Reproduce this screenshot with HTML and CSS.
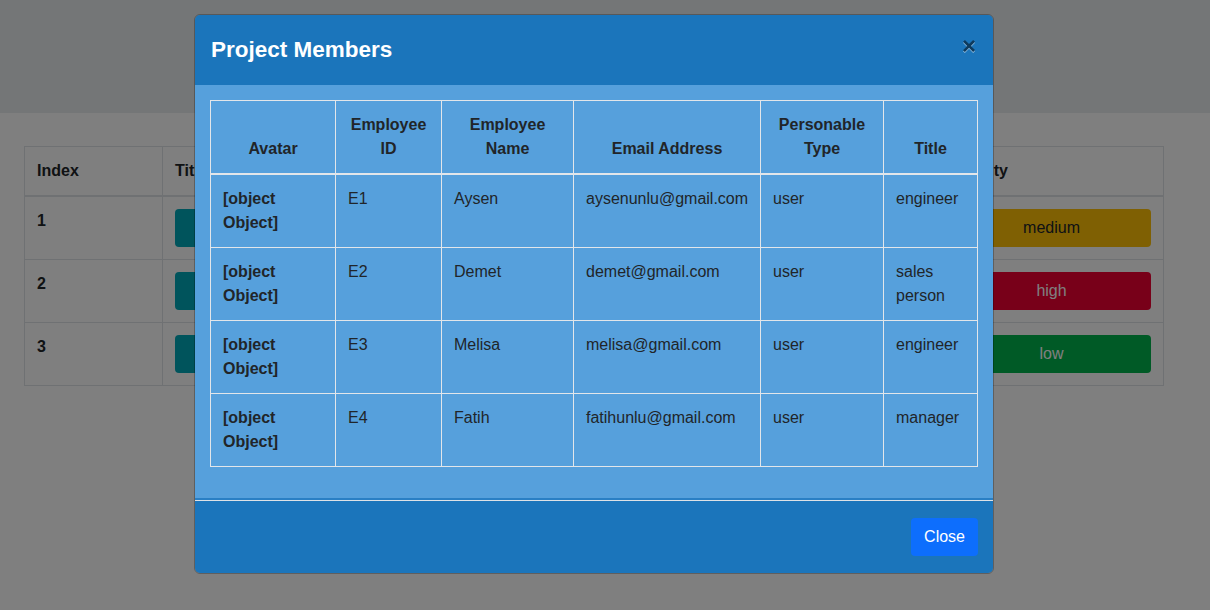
FILE: index.html
```html
<!DOCTYPE html>
<html lang="en">
  <head>
    <meta charset="UTF-8" />
    <meta name="viewport" content="width=device-width, initial-scale=1.0" />
    <title>Projects</title>
    <link rel="stylesheet" href="styles.css">
  </head>
  <body>
    <div class="top-band"></div>
    <div class="page">
      <table class="projects">
        <colgroup>
          <col style="width: 138px" />
          <col style="width: 300px" />
          <col style="width: 477px" />
          <col style="width: 224px" />
        </colgroup>
        <thead>
          <tr>
            <th>Index</th>
            <th>Title</th>
            <th>Description</th>
            <th>Priority</th>
          </tr>
        </thead>
        <tbody>
          <tr>
            <td class="bold">1</td>
            <td><button class="btn btn-teal">Project A</button></td>
            <td>Project description</td>
            <td><button class="btn btn-medium">medium</button></td>
          </tr>
          <tr>
            <td class="bold">2</td>
            <td><button class="btn btn-teal">Project B</button></td>
            <td>Project description</td>
            <td><button class="btn btn-high">high</button></td>
          </tr>
          <tr>
            <td class="bold">3</td>
            <td><button class="btn btn-teal">Project C</button></td>
            <td>Project description</td>
            <td><button class="btn btn-low">low</button></td>
          </tr>
        </tbody>
      </table>
    </div>

    <div class="backdrop"></div>

    <div class="modal">
      <div class="modal-header">
        <h4 class="modal-title">Project Members</h4>
        <button class="close">&times;</button>
      </div>
      <div class="modal-body">
        <table class="members">
          <colgroup>
            <col style="width: 125px" />
            <col style="width: 106px" />
            <col style="width: 132px" />
            <col style="width: 187px" />
            <col style="width: 123px" />
            <col style="width: 94px" />
          </colgroup>
          <thead>
            <tr>
              <th>Avatar</th>
              <th>Employee ID</th>
              <th>Employee Name</th>
              <th>Email Address</th>
              <th>Personable Type</th>
              <th>Title</th>
            </tr>
          </thead>
          <tbody>
            <tr>
              <th>[object Object]</th>
              <td>E1</td>
              <td>Aysen</td>
              <td>aysenunlu@gmail.com</td>
              <td>user</td>
              <td>engineer</td>
            </tr>
            <tr>
              <th>[object Object]</th>
              <td>E2</td>
              <td>Demet</td>
              <td>demet@gmail.com</td>
              <td>user</td>
              <td>sales person</td>
            </tr>
            <tr>
              <th>[object Object]</th>
              <td>E3</td>
              <td>Melisa</td>
              <td>melisa@gmail.com</td>
              <td>user</td>
              <td>engineer</td>
            </tr>
            <tr>
              <th>[object Object]</th>
              <td>E4</td>
              <td>Fatih</td>
              <td>fatihunlu@gmail.com</td>
              <td>user</td>
              <td>manager</td>
            </tr>
          </tbody>
        </table>
      </div>
      <div class="modal-footer">
        <button class="btn btn-primary">Close</button>
      </div>
    </div>
  </body>
</html>
```

FILE: styles.css
```css
* {
  padding: 0;
  margin: 0;
  box-sizing: border-box;
}
body {
  font-family: "Liberation Sans", Arial, sans-serif;
  font-size: 16px;
  line-height: 1.5;
  color: #212529;
  background-color: #ffffff;
  overflow: hidden;
}
.top-band {
  height: 113px;
  background-color: #e9ecef;
}
.page {
  padding: 33px 47px 0 24px;
}
table {
  border-collapse: collapse;
  table-layout: fixed;
}
.projects {
  width: 1139px;
}
.projects th,
.projects td {
  border: 1px solid #dee2e6;
  padding: 12px;
  text-align: left;
  vertical-align: top;
}
.projects thead th {
  border-bottom: 2px solid #dee2e6;
}
.bold {
  font-weight: bold;
}
.btn {
  display: block;
  width: 100%;
  height: 38px;
  border: none;
  border-radius: 4px;
  font-family: inherit;
  font-size: 16px;
  color: #ffffff;
}
.btn-teal {
  background-color: #00a8b8;
}
.btn-medium {
  background-color: #ffc107;
  color: #212529;
}
.btn-high {
  background-color: #f00033;
}
.btn-low {
  background-color: #00b44c;
}

.backdrop {
  position: fixed;
  top: 0;
  left: 0;
  right: 0;
  bottom: 0;
  background-color: rgba(0, 0, 0, 0.5);
}
.modal {
  position: fixed;
  top: 14px;
  left: 194px;
  width: 800px;
  border: 1px solid rgba(0, 0, 0, 0.25);
  border-radius: 6px;
  overflow: hidden;
  display: flex;
  flex-direction: column;
}
.modal-header {
  display: flex;
  justify-content: space-between;
  align-items: flex-start;
  padding: 16px 17px 16px 16px;
  height: 70px;
  background-color: #1b75bb;
}
.modal-title {
  font-size: 22.5px;
  font-weight: bold;
  line-height: 38px;
  color: #ffffff;
}
.close {
  margin-top: 3px;
  border: none;
  background: none;
  font-family: "Liberation Sans", Arial, sans-serif;
  font-size: 24px;
  font-weight: bold;
  line-height: 1;
  color: #000000;
  opacity: 0.5;
  text-shadow: 0 1px 0 #ffffff;
}
.modal-body {
  padding: 15px 15px 15px 15px;
  background-color: #56a0dc;
  border-bottom: 2px solid #2a7fc4;
}
.members {
  width: 767px;
  margin-bottom: 16px;
}
.members th,
.members td {
  border: 1px solid #e2e6ea;
  padding: 12px;
  text-align: left;
  vertical-align: top;
}
.members thead th {
  text-align: center;
  vertical-align: bottom;
  border-bottom: 2px solid #e2e6ea;
}
.modal-footer {
  display: flex;
  justify-content: flex-end;
  padding: 17px 15px 17px 15px;
  background-color: #1b75bb;
  border-top: 1px solid #dee2e6;
}
.modal-footer .btn {
  width: auto;
  padding: 0 13px;
}
.btn-primary {
  background-color: #0d6efd;
}
```
